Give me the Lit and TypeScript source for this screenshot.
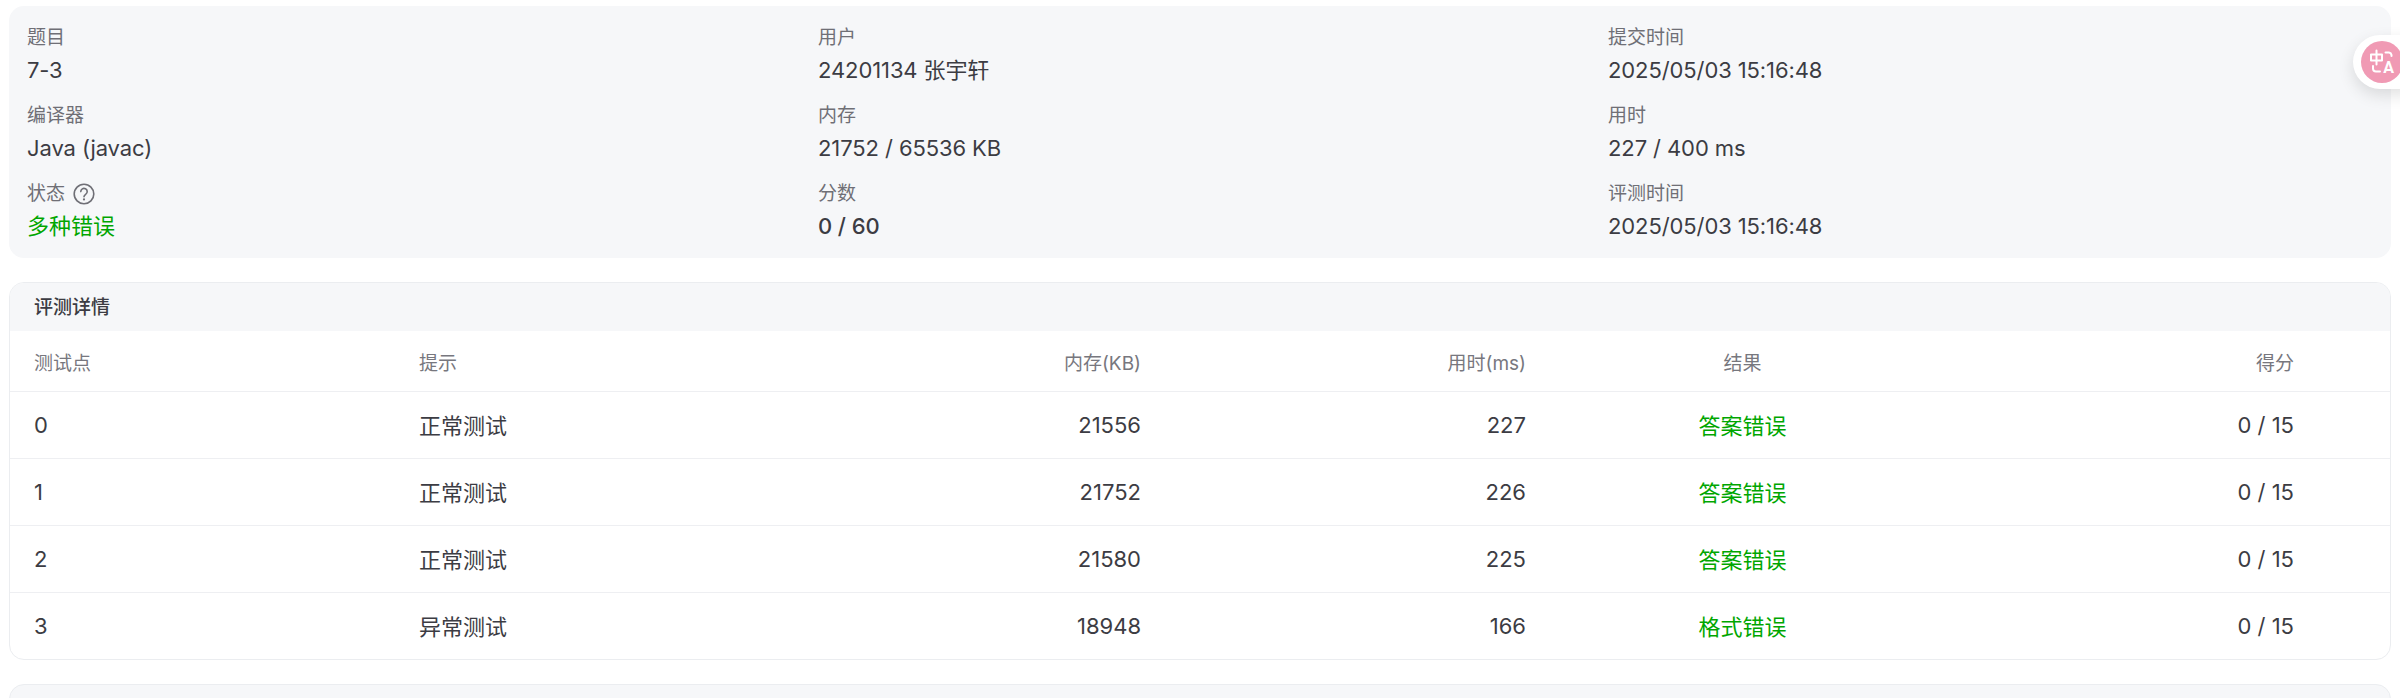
import { LitElement, html, css, svg } from "lit";
import { customElement } from "lit/decorators.js";

const info = [
  ["题目", "7-3", "用户", "24201134 张宇轩", "提交时间", "2025/05/03 15:16:48"],
  ["编译器", "Java (javac)", "内存", "21752 / 65536 KB", "用时", "227 / 400 ms"],
  ["状态", "多种错误", "分数", "0 / 60", "评测时间", "2025/05/03 15:16:48"],
];
const rows = [
  ["0", "正常测试", "21556", "227", "答案错误", "0 / 15"],
  ["1", "正常测试", "21752", "226", "答案错误", "0 / 15"],
  ["2", "正常测试", "21580", "225", "答案错误", "0 / 15"],
  ["3", "异常测试", "18948", "166", "格式错误", "0 / 15"],
];

@customElement("app-root")
export class AppRoot extends LitElement {
  static styles = css`
    :host {
      display: block;
      height: 698px;
      overflow: hidden;
      background: #fff;
      color: #3c3c43;
      font-family: Inter, "Noto Sans CJK SC", sans-serif;
      position: relative;
    }
    .page { padding: 6px 9px 0; display: flex; flex-direction: column; gap: 24px; }
    .info {
      background: #f6f7f9;
      border-radius: 15px;
      height: 252px;
      box-sizing: border-box;
      padding: 18px 18px 0;
      display: grid;
      grid-template-columns: 791px 790px 1fr;
      grid-auto-rows: 78px;
    }
    .label { font-size: 19px; line-height: 27px; color: #6f6f76; display: flex; align-items: center; gap: 8px; }
    .value { font-size: 22px; line-height: 31px; margin-top: 4px; letter-spacing: -0.1px; }
    .status { color: #00a600; letter-spacing: 0; }
    .strong { font-weight: 500; }
    .card {
      border: 1px solid #ebedf0;
      border-radius: 15px;
      overflow: hidden;
    }
    .title {
      background: #f6f7f9;
      height: 48px;
      line-height: 50px;
      padding-left: 24px;
      font-size: 19px;
      font-weight: 500;
    }
    .row {
      display: grid;
      box-sizing: border-box;
      grid-template-columns: 385px 385px 385px 385px 385px 1fr;
      height: 67px;
      align-items: center;
      font-size: 22px;
      border-top: 1px solid #eeeff2;
    }
    .row.head { height: 60px; border-top: 0; font-size: 19px; color: #77777e; }
    .row > div { padding: 0 24px; }
    .row > .cjk { padding-bottom: 2px; }
    .r { text-align: right; }
    .c { text-align: center; }
    .last { padding-right: 96px !important; }
    .ok { color: #00a600; }
    .next {
      background: #f6f7f9;
      border: 1px solid #ebedf0;
      border-radius: 15px 15px 0 0;
      height: 40px;
    }
    .fab {
      position: absolute;
      left: 2353px;
      top: 35px;
      width: 60px;
      height: 54px;
      border-radius: 27px 0 0 27px;
      background: #fff;
      box-shadow: 0 6px 16px rgba(0,0,0,.12);
      display: flex;
      align-items: center;
      padding-left: 8px;
      box-sizing: border-box;
    }
    .fab svg { display: block; flex: none; }
  `;

  render() {
    return html`
      <div class="page">
        <section class="info">
          ${[0, 1, 2].map((r) =>
            [0, 2, 4].map((c) => {
              const l = info[r][c];
              const v = info[r][c + 1];
              return html`<div>
                <div class="label">${l}${l === "状态" ? this.help() : ""}</div>
                <div class="value ${l === "状态" ? "status" : l === "分数" ? "strong" : ""}">${v}</div>
              </div>`;
            })
          )}
        </section>
        <section class="card">
          <div class="title">评测详情</div>
          <div class="row head">
            <div>测试点</div><div>提示</div><div class="r">内存(KB)</div><div class="r">用时(ms)</div><div class="c">结果</div><div class="r last">得分</div>
          </div>
          ${rows.map(
            (r) => html`<div class="row">
              <div>${r[0]}</div><div class="cjk">${r[1]}</div><div class="r">${r[2]}</div><div class="r">${r[3]}</div><div class="c ok cjk">${r[4]}</div><div class="r last">${r[5]}</div>
            </div>`
          )}
        </section>
        <div class="next"></div>
      </div>
      <div class="fab">
        <svg width="42" height="42" viewBox="0 0 42 42">
          <circle cx="21" cy="21" r="21" fill="#f09ab4"></circle>
          ${svg`<g fill="none" stroke="#fff" stroke-width="2" stroke-linecap="round" stroke-linejoin="round">
            <path d="M10 13.5h11v6H10zM15.5 9.5v14"></path>
            <path d="M24.5 11.5h3.5a3 3 0 0 1 2.5 2.5v1"></path>
            <path d="M12 25v2.5a3 3 0 0 0 3 3h4"></path>
          </g>
          <text x="27.5" y="32" text-anchor="middle" fill="#fff" font-family="Roboto, sans-serif" font-weight="700" font-size="16">A</text>`}
        </svg>
      </div>
    `;
  }

  help() {
    return html`<svg width="22" height="22" viewBox="0 0 22 22">
      <circle cx="11" cy="11" r="9.8" fill="none" stroke="#6f6f76" stroke-width="1.6"></circle>
      <path d="M7.8 8.6a3.2 3.2 0 1 1 5 2.6c-1 .7-1.8 1.2-1.8 2.6" fill="none" stroke="#6f6f76" stroke-width="1.6" stroke-linecap="round"></path>
      <circle cx="11" cy="16.4" r="1.1" fill="#6f6f76"></circle>
    </svg>`;
  }
}
